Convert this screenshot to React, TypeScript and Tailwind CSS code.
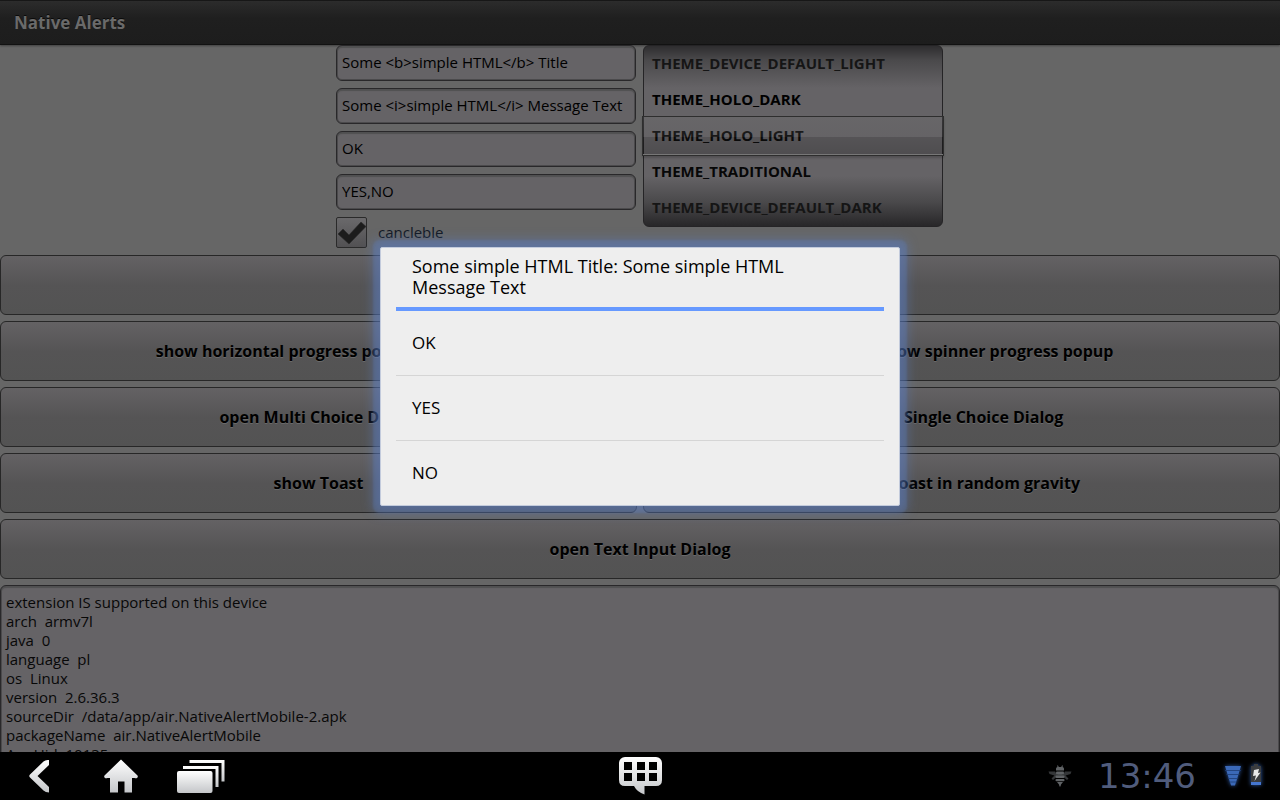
import React from "react";

const themes = [
  { name: "THEME_DEVICE_DEFAULT_LIGHT", tone: "text-[#151515]" },
  { name: "THEME_HOLO_DARK", tone: "text-black" },
  { name: "THEME_HOLO_LIGHT", tone: "text-[#0c0c0c]" },
  { name: "THEME_TRADITIONAL", tone: "text-[#070707]" },
  { name: "THEME_DEVICE_DEFAULT_DARK", tone: "text-[#151515]" },
];

const log = `extension IS supported on this device
arch  armv7l
java  0
language  pl
os  Linux
version  2.6.36.3
sourceDir  /data/app/air.NativeAlertMobile-2.apk
packageName  air.NativeAlertMobile
AppUid  10135`;

function Field({ label, value }: { label: string; value: string }) {
  return (
    <input
      type="text"
      aria-label={label}
      defaultValue={value}
      className="block h-9 w-full rounded-md border border-[#29282a] bg-[#656366] px-[5px] pb-0.5 text-[15px] text-black shadow-[inset_0_2px_1px_#505051,inset_0_0_0_1px_#4b4a4c] outline-none"
    />
  );
}

function ActionButton({
  children,
  label,
  size = "min-w-0 flex-1",
}: {
  children?: React.ReactNode;
  label?: string;
  size?: string;
}) {
  return (
    <button
      type="button"
      aria-label={label}
      className={`${size} h-[60px] rounded-md border border-[#272727] bg-linear-to-b from-[#646264] via-[#555455] via-50% to-[#535353] text-base font-bold whitespace-nowrap text-black [text-shadow:0_1px_0_#6a6a6a]`}
    >
      {children}
    </button>
  );
}

function ThemePicker() {
  return (
    <div className="relative w-[300px]">
      <ul
        role="listbox"
        aria-label="Theme"
        className="rounded-md border border-[#252426] bg-[linear-gradient(to_bottom,#2e2d2f_0px,#4a494b_14px,#656366_42px,#656366_130px,#4a494b_156px,#282729_180px)] text-[15px] font-bold"
      >
        {themes.map((t) => (
          <li
            key={t.name}
            role="option"
            aria-selected={t.name === "THEME_HOLO_LIGHT"}
            className={`flex h-9 items-center px-2 pb-0.5 ${t.tone}`}
          >
            {t.name}
          </li>
        ))}
      </ul>
      <div className="pointer-events-none absolute -inset-x-px top-[71px] h-10 border border-[#2e2e2e] bg-[linear-gradient(to_bottom,#6e6e6e40_0px,#64646420_20px,#00000028_20px,#00000038_37px,#777777_37px)] shadow-[0_2px_2px_#00000030]" />
    </div>
  );
}

function AlertDialog() {
  return (
    <div className="absolute inset-0 flex items-center justify-center">
      <div
        role="dialog"
        aria-labelledby="dialog-title"
        className="w-[520px] rounded-xs border border-[#c3cbdc] bg-[#eeeeee] px-[15px] shadow-[0_0_2px_7px_#5b7fc840,0_0_12px_7px_#5b7fc870]"
      >
        <h2
          id="dialog-title"
          className="border-b-4 border-[#6699ff] px-4 pt-2 pb-[9px] text-[18px] leading-[21px] text-black"
        >
          <span className="block max-w-[390px]">Some simple HTML Title: Some simple HTML Message Text</span>
        </h2>
        <ul className="divide-y divide-[#d5d5d5]">
          {["OK", "YES", "NO"].map((o) => (
            <li key={o}>
              <button type="button" className="flex h-16 w-full items-center px-4 text-[17px] text-black">
                {o}
              </button>
            </li>
          ))}
        </ul>
      </div>
    </div>
  );
}

function BackIcon() {
  return (
    <svg width="24" height="36" viewBox="0 0 24 36">
      <path d="M16.500 3.500q2-2 5.500-1.500v5L10.500 18 22 29v5.500q-3.500 0-5.500-2L3 19.500q-1.500-1.500 0-3Z" fill="url(#silver)" />
    </svg>
  );
}

function HomeIcon() {
  return (
    <svg width="36" height="36" viewBox="0 0 36 36">
      <path d="M18 1.500 34.500 17.500c1 1.500-.5 3.500-3 2.500H29v14.500h-7.500V23.500h-6.500v11H7V20H4.500c-2.500 1-4-1-3-2.500Z" fill="url(#silver)" />
    </svg>
  );
}

function RecentsIcon() {
  return (
    <svg width="48" height="36" viewBox="0 0 48 36">
      <g fill="url(#silver)">
        <rect x="0" y="13" width="35.500" height="22" rx="2" />
        <path d="M6 8h35.500v21H38.500V11H6Z" />
        <path d="M12.500 2H47.500v21.500h-3V5h-32Z" />
      </g>
    </svg>
  );
}

function KeypadIcon() {
  return (
    <svg width="44" height="40" viewBox="0 0 44 40">
      <path d="M7 1h31a6 6 0 0 1 6 6v17q0 6-6 6H26.500v8.500Q19 36 16 30H7q-6 0-6-6V7a6 6 0 0 1 6-6Z" fill="url(#silver)" />
      <g fill="#000">
        <rect x="6" y="6" width="8" height="8" />
        <rect x="19" y="6" width="8" height="8" />
        <rect x="31" y="6" width="8" height="8" />
        <rect x="6" y="17" width="8" height="8" />
        <rect x="19" y="17" width="8" height="8" />
        <rect x="31" y="17" width="8" height="8" />
      </g>
    </svg>
  );
}

function BeeIcon() {
  return (
    <svg width="24" height="22" viewBox="0 0 24 22">
      <path d="M.500 6.500 7 6.500l2 3 3-1 3 1 2-3 6.500 0-1 2.500-5 1.500 3 3-1.500 1.500-4-3.500H9l-4 3.500L3.500 13.500l3-3-5-1.500Z" fill="#343638" />
      <g fill="#5f6265">
        <path d="M8 4c0-1 .5-2 1.500-2L9 .5h1l.8 1.500h2.400L14 .5h1l-.5 1.500c1 0 1.500 1 1.500 2v1.500H8Z" />
        <rect x="8" y="6.500" width="8" height="3" rx="1" />
        <rect x="7.500" y="10.500" width="9" height="2.500" rx="1" />
        <rect x="7.500" y="14" width="9" height="2.200" rx="1" />
        <path d="M9 17h6l-2 2.500-.5 2h-1L11 19.500Z" />
      </g>
    </svg>
  );
}

function SignalIcon() {
  return (
    <svg width="22" height="26" viewBox="0 0 22 26" className="drop-shadow-[0_0_2px_#2c559d]">
      <path d="M3 3h16l-6 19.500H9Z" fill="#3b69b8" />
      <path d="M3 7.500h16M4.500 11.500h13M6 15.500h10M7.500 19h7" stroke="#1d3c73" strokeWidth=".8" />
    </svg>
  );
}

function BatteryIcon() {
  return (
    <svg width="16" height="26" viewBox="0 0 16 26" className="drop-shadow-[0_0_2px_#315da8]">
      <path d="M6 1h4v2h3v19H3V3h3Z" fill="#3a3c3f" />
      <rect x="3" y="19" width="10" height="3" fill="#4475cf" />
      <path d="m6 7 5-1-1 4 2.500-.5L6.500 18 8 12.500l-3 .5Z" fill="#e8e8e8" />
    </svg>
  );
}

export default function App() {
  return (
    <div className="flex h-screen flex-col overflow-hidden bg-black font-['Open_Sans','Noto_Sans',sans-serif]">
      <svg width="0" height="0" className="absolute" aria-hidden="true">
        <defs>
          <linearGradient id="silver" x1="0" y1="0" x2="0" y2="1">
            <stop offset="0" stopColor="#ffffff" />
            <stop offset="1" stopColor="#c4c6c9" />
          </linearGradient>
        </defs>
      </svg>

      <main className="relative flex min-h-0 flex-1 flex-col overflow-hidden bg-[#666666]">
        <header className="flex h-[45px] shrink-0 items-center border-t border-b border-t-[#171717] border-b-[#121212] bg-linear-to-b from-[#2c2c2c] via-[#1f1f1f] via-40% to-[#1d1d1d] px-3.5 shadow-[0_1px_2px_#00000060]">
          <h1 className="text-[17px] font-bold text-[#6a6a6a] [text-shadow:0_-1px_0_#0a0a0a]">Native Alerts</h1>
        </header>

        <form className="flex shrink-0 flex-col">
          <div className="flex items-start justify-center gap-[7px] pr-px pb-[7px]">
            <div className="flex w-[300px] flex-col gap-[7px]">
              <Field label="Title" value="Some <b>simple HTML</b> Title" />
              <Field label="Message" value="Some <i>simple HTML</i> Message Text" />
              <Field label="Close label" value="OK" />
              <Field label="Other labels" value="YES,NO" />
              <div className="flex h-[31px] items-center gap-[11px]">
                <span className="grid">
                  <input
                    id="cancelable"
                    type="checkbox"
                    defaultChecked
                    className="col-start-1 row-start-1 size-[31px] appearance-none rounded-xs border border-[#2a2a2a] bg-linear-to-b from-[#6a696b] to-[#525153]"
                  />
                  <svg viewBox="0 0 31 31" className="pointer-events-none col-start-1 row-start-1 size-[31px]">
                    <path d="M2 17 7 12l6 6L25 5l5 4.500L13 27Z" fill="#1c1c1c" stroke="#2c2c2c" strokeWidth=".6" />
                  </svg>
                </span>
                <label htmlFor="cancelable" className="text-[15px] text-[#111722]">cancleble</label>
              </div>
            </div>
            <ThemePicker />
          </div>

          <div className="flex flex-col gap-1.5">
            <div className="flex">
              <ActionButton label="open dialog" />
            </div>
            <div className="flex gap-1.5">
              <ActionButton>show horizontal progress popup</ActionButton>
              <ActionButton label="hide progress" size="w-[132px]" />
              <ActionButton>show spinner progress popup</ActionButton>
            </div>
            <div className="flex gap-1.5">
              <ActionButton>open Multi Choice Dialog</ActionButton>
              <ActionButton>open Single Choice Dialog</ActionButton>
            </div>
            <div className="flex gap-1.5">
              <ActionButton>show Toast</ActionButton>
              <ActionButton>show Toast in random gravity</ActionButton>
            </div>
            <div className="flex">
              <ActionButton>open Text Input Dialog</ActionButton>
            </div>
            <textarea
              aria-label="Log"
              readOnly
              value={log}
              className="block h-60 w-full resize-none overflow-hidden rounded-md border border-[#29282a] bg-[#656366] px-[5px] py-[7px] text-[15px] leading-[19px] text-[#080808] shadow-[inset_0_2px_1px_#505051,inset_0_0_0_1px_#4b4a4c] outline-none"
            />
          </div>
        </form>

        <AlertDialog />
      </main>

      <nav className="grid h-12 shrink-0 grid-cols-[1fr_auto_1fr] items-center bg-black">
        <div className="flex items-center pl-[27px]">
          <button type="button" aria-label="Back"><BackIcon /></button>
          <button type="button" aria-label="Home" className="pl-[52px]"><HomeIcon /></button>
          <button type="button" aria-label="Recent apps" className="pl-[38px]"><RecentsIcon /></button>
        </div>
        <button type="button" aria-label="Keypad"><KeypadIcon /></button>
        <div className="flex items-center justify-end gap-2 pr-4">
          <BeeIcon />
          <time className="w-[134px] text-center font-['DejaVu_Sans',sans-serif] text-[34px] leading-none text-[#505c7c]">13:46</time>
          <div className="flex items-center gap-1">
            <SignalIcon />
            <BatteryIcon />
          </div>
        </div>
      </nav>
    </div>
  );
}
